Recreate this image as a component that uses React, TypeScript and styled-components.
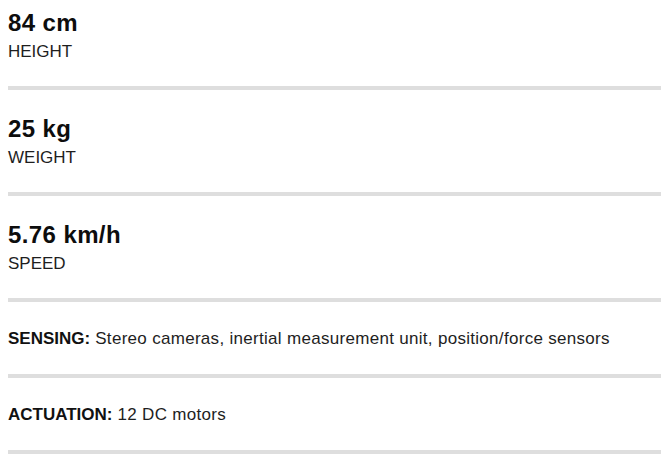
import React from "react";
import styled, { createGlobalStyle } from "styled-components";

const GlobalStyle = createGlobalStyle`
  html, body {
    margin: 0;
    padding: 0;
    background: #ffffff;
  }
  body {
    font-family: "Liberation Sans", Arial, Helvetica, sans-serif;
    color: #111111;
    -webkit-font-smoothing: antialiased;
  }
`;

const Specs = styled.ul`
  list-style: none;
  margin: 0;
  padding: 8px 0 0 8px;
  display: flex;
  flex-direction: column;
`;

const Stat = styled.li<{ $first?: boolean }>`
  padding: ${(p) => (p.$first ? "0" : "24px")} 0 22px 0;
  border-bottom: 4px solid #dedede;
  display: flex;
  flex-direction: column;
`;

const Value = styled.span`
  font-size: 24px;
  line-height: 30px;
  font-weight: 700;
  letter-spacing: 0.4px;
  color: #0d0d0d;
`;

const Label = styled.span`
  font-size: 17px;
  line-height: 24px;
  margin-top: 2px;
  color: #1e1e1e;
  text-transform: uppercase;
`;

const Detail = styled.li`
  padding: 25px 0 23px 0;
  border-bottom: 4px solid #dedede;
  font-size: 17px;
  line-height: 24px;
  letter-spacing: 0.3px;
  color: #1e1e1e;
`;

const Key = styled.strong`
  font-weight: 700;
  letter-spacing: 0;
  color: #111111;
`;

const stats = [
  { value: "84 cm", label: "Height" },
  { value: "25 kg", label: "Weight" },
  { value: "5.76 km/h", label: "Speed" },
];

const details = [
  { key: "SENSING:", text: "Stereo cameras, inertial measurement unit, position/force sensors" },
  { key: "ACTUATION:", text: "12 DC motors" },
];

export default function App() {
  return (
    <>
      <GlobalStyle />
      <Specs>
        {stats.map((s, i) => (
          <Stat key={s.label} $first={i === 0}>
            <Value>{s.value}</Value>
            <Label>{s.label}</Label>
          </Stat>
        ))}
        {details.map((d) => (
          <Detail key={d.key}>
            <Key>{d.key}</Key> {d.text}
          </Detail>
        ))}
      </Specs>
    </>
  );
}
